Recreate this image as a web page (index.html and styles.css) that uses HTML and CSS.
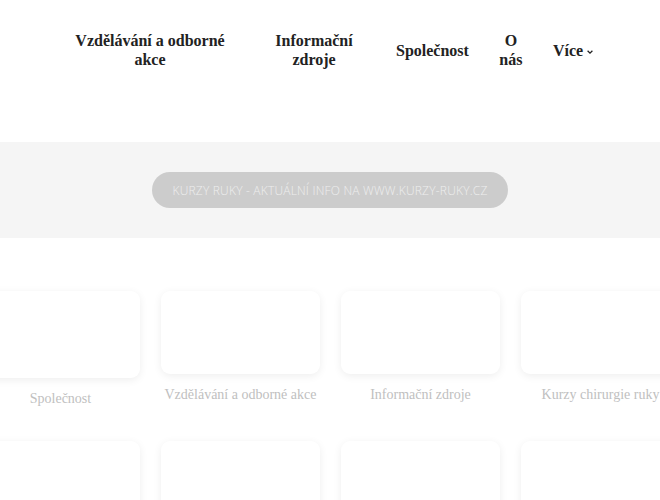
FILE: index.html
```html
<!DOCTYPE html>
<html lang="cs">
<head>
<meta charset="utf-8">
<link rel="stylesheet" href="styles.css">
</head>
<body>
<header class="header">
  <nav class="nav">
    <a class="nav-item w1" href="#">Vzdělávání a odborné akce</a>
    <a class="nav-item w2" href="#">Informační zdroje</a>
    <a class="nav-item w3" href="#">Společnost</a>
    <a class="nav-item w4" href="#">O nás</a>
    <a class="nav-item w5" href="#">Více <svg class="chev" viewBox="0 0 10 10" width="8" height="8"><path d="M2 3.5 L5 6.5 L8 3.5" fill="none" stroke="#222" stroke-width="1.6"/></svg></a>
  </nav>
</header>
<section class="band">
  <a class="pill" href="#">Kurzy ruky - aktuální info na www.kurzy-ruky.cz</a>
</section>
<section class="cards">
  <div class="grid">
    <div class="item first"><div class="card"></div><div class="label">Společnost</div></div>
    <div class="item"><div class="card"></div><div class="label">Vzdělávání a odborné akce</div></div>
    <div class="item"><div class="card"></div><div class="label">Informační zdroje</div></div>
    <div class="item"><div class="card"></div><div class="label">Kurzy chirurgie ruky</div></div>
    <div class="item"><div class="card tall"></div></div>
    <div class="item"><div class="card tall"></div></div>
    <div class="item"><div class="card tall"></div></div>
    <div class="item"><div class="card tall"></div></div>
  </div>
</section>
</body>
</html>
```
FILE: styles.css
```css
html, body {
  margin: 0;
  padding: 0;
  background: #ffffff;
  overflow: hidden;
}
body {
  width: 660px;
  height: 500px;
  font-family: "Liberation Serif", serif;
}
.header {
  height: 142px;
  box-sizing: border-box;
  padding-top: 31px;
}
.nav {
  display: flex;
  align-items: center;
  padding-left: 70px;
}
.nav-item {
  color: #222;
  text-decoration: none;
  font-weight: bold;
  font-size: 16px;
  line-height: 19px;
  text-align: center;
}
.w1 { width: 160px; }
.w2 { width: 90px; margin-left: 39px; }
.w3 { margin-left: 37px; }
.w4 { width: 30px; margin-left: 27px; }
.w5 { margin-left: 27px; display: flex; align-items: center; gap: 3px; }
.chev { display: block; margin-top: 3px; }
.band {
  height: 96px;
  background: #f5f5f5;
  display: flex;
  align-items: center;
  justify-content: center;
}
.pill {
  display: flex;
  align-items: center;
  justify-content: center;
  width: 356px;
  height: 36px;
  border-radius: 18px;
  background: #cccccc;
  color: #eeeeee;
  text-decoration: none;
  text-transform: uppercase;
  font-family: "Open Sans", sans-serif;
  font-weight: 300;
  font-size: 12px;
  letter-spacing: 0.2px;
}
.cards {
  padding-top: 53px;
}
.grid {
  display: grid;
  grid-template-columns: repeat(4, 159px);
  column-gap: 21px;
  row-gap: 34px;
  margin-left: -19px;
  align-items: start;
}
.card {
  height: 83px;
  background: #fff;
  border-radius: 9px;
  box-shadow: 0 2px 8px rgba(0,0,0,0.07);
}
.first .card { height: 87px; }
.label {
  margin-top: 13px;
  text-align: center;
  color: #c0c0c0;
  font-size: 14px;
  line-height: 16px;
}
.tall { height: 90px; }
```
